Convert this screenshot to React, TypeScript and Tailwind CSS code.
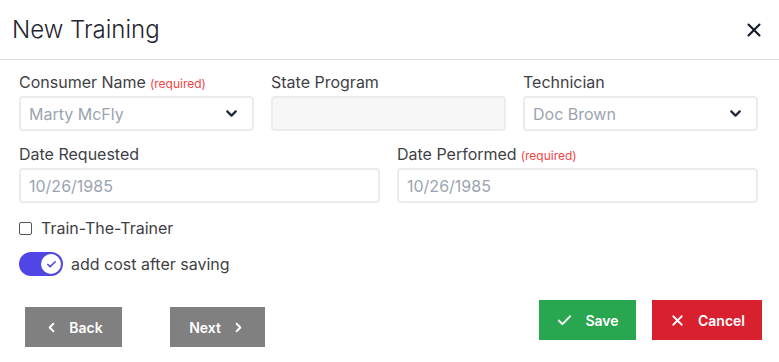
import { useState } from "react";
import { ChevronDown, ChevronLeft, ChevronRight, Check, X } from "lucide-react";

const Label = ({ text, required }: { text: string; required?: boolean }) => (
  <div className="h-[24px] flex items-end pb-[2px] text-[16px] text-[#3f3f46] leading-none">
    {text}
    {required && <span className="ml-[4px] text-[12px] text-[#ef4444]">(required)</span>}
  </div>
);

const SelectBox = ({ value }: { value: string }) => (
  <div className="mt-[4px] h-[35px] border-2 border-[#ececf0] rounded-[4px] flex items-center justify-between pl-[8px] pr-[12px] text-[16px] text-[#9ca3af]">
    <span>{value}</span>
    <ChevronDown className="w-[17px] h-[17px] text-[#1f2937]" strokeWidth={3.2} />
  </div>
);

const TextBox = ({ value, disabled }: { value?: string; disabled?: boolean }) => (
  <div
    className={`mt-[4px] h-[35px] border-2 border-[#ececf0] rounded-[4px] flex items-center pl-[8px] text-[16px] text-[#9ca3af] ${
      disabled ? "bg-[#f7f7f8]" : "bg-white"
    }`}
  >
    {value}
  </div>
);

export default function App() {
  const [on, setOn] = useState(true);
  return (
    <div className="w-[779px] h-[362px] bg-white font-['Inter',sans-serif] text-[#1f2937]">
      <div className="h-[60px] border-b border-[#dedede] flex items-center justify-between pl-[12px] pr-[14px]">
        <h1 className="text-[24px] font-light text-[#1f2430]">New Training</h1>
        <X className="w-[22px] h-[22px] text-[#111827]" strokeWidth={2.3} />
      </div>

      <div className="pl-[19px] pr-[21px] pt-[8px]">
        <div className="grid grid-cols-3 gap-x-[17px]">
          <div>
            <Label text="Consumer Name" required />
            <SelectBox value="Marty McFly" />
          </div>
          <div>
            <Label text="State Program" />
            <TextBox disabled />
          </div>
          <div>
            <Label text="Technician" />
            <SelectBox value="Doc Brown" />
          </div>
        </div>

        <div className="grid grid-cols-2 gap-x-[17px] mt-[9px]">
          <div>
            <Label text="Date Requested" />
            <TextBox value="10/26/1985" />
          </div>
          <div>
            <Label text="Date Performed" required />
            <TextBox value="10/26/1985" />
          </div>
        </div>

        <label className="mt-[13px] h-[24px] flex items-center gap-[9px] text-[16px] text-[#3f3f46]">
          <span className="w-[13px] h-[13px] border border-[#555] rounded-[2px] bg-white" />
          Train-The-Trainer
        </label>

        <div className="mt-[12px] flex items-center gap-[8px] text-[16px] text-[#3f3f46]">
          <button
            onClick={() => setOn(!on)}
            className="w-[44px] h-[24px] rounded-full bg-[#4f46e5] flex items-center justify-end pr-[2px]"
          >
            <span className="w-[20px] h-[20px] rounded-full bg-white flex items-center justify-center">
              <Check className="w-[11px] h-[11px] text-[#4f46e5]" strokeWidth={3.5} />
            </span>
          </button>
          add cost after saving
        </div>
      </div>

      <div className="flex items-start justify-between pl-[25px] pr-[17px] mt-[24px]">
        <div className="flex gap-[48px] mt-[7px]">
          <button className="w-[97px] h-[40px] bg-[#808080] text-white text-[14px] font-semibold flex items-center justify-center gap-[10px]">
            <ChevronLeft className="w-[15px] h-[15px]" strokeWidth={3} />
            Back
          </button>
          <button className="w-[95px] h-[40px] bg-[#808080] text-white text-[14px] font-semibold flex items-center justify-center gap-[10px]">
            Next
            <ChevronRight className="w-[15px] h-[15px]" strokeWidth={3} />
          </button>
        </div>
        <div className="flex gap-[16px]">
          <button className="w-[97px] h-[40px] bg-[#28a650] text-white text-[14px] font-semibold flex items-center justify-center gap-[12px]">
            <Check className="w-[17px] h-[17px]" strokeWidth={2.5} />
            Save
          </button>
          <button className="w-[110px] h-[40px] bg-[#d9202f] text-white text-[14px] font-semibold flex items-center justify-center gap-[12px]">
            <X className="w-[17px] h-[17px]" strokeWidth={2.5} />
            Cancel
          </button>
        </div>
      </div>
    </div>
  );
}
